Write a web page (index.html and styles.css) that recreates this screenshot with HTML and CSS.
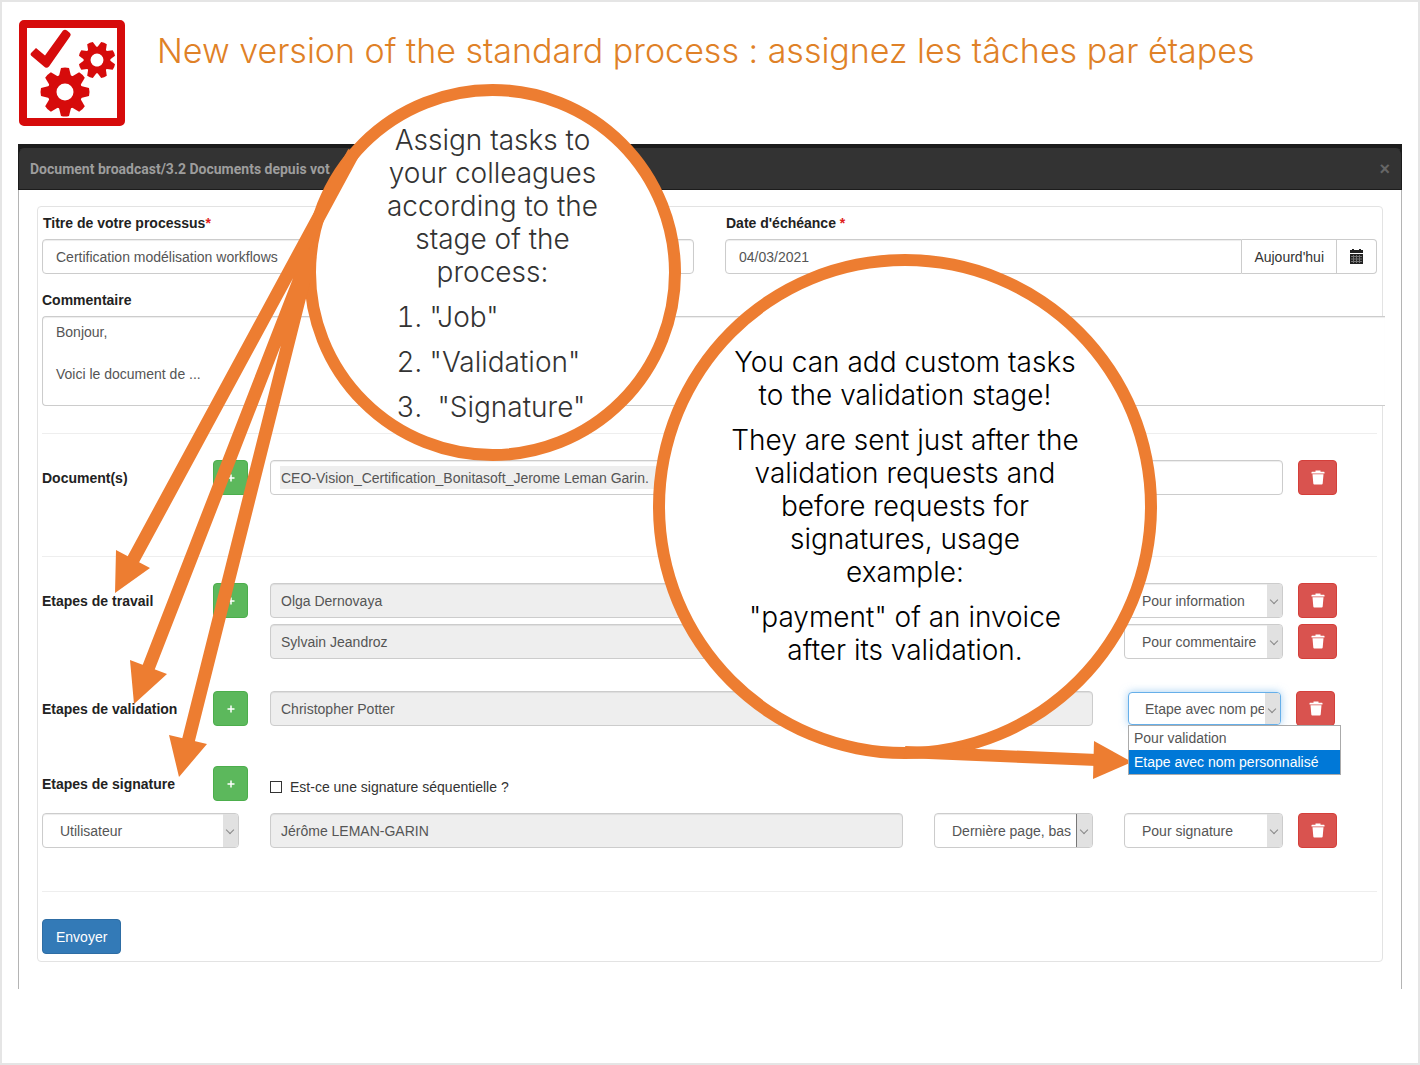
FILE: index.html
```html
<!DOCTYPE html>
<html lang="fr">
<head>
<meta charset="utf-8">
<title>New version of the standard process</title>
<link rel="stylesheet" href="styles.css">
</head>
<body>
<svg class="sprite" aria-hidden="true">
  <symbol id="trash" viewBox="0 0 14 15">
    <path fill="currentColor" d="M4.500 0.500h5v1.200h3.500a.5.500 0 0 1 .5.500v1.300H.5V2.200a.5.500 0 0 1 .5-.5h3.500zM1.500 4.300h11l-.8 9.300a1 1 0 0 1-1 .9H3.300a1 1 0 0 1-1-.9z"/>
  </symbol>
  <symbol id="plus" viewBox="0 0 8 8">
    <path fill="none" stroke="currentColor" stroke-width="1.500" d="M4 .5v7M.5 4h7"/>
  </symbol>
</svg>
<main class="slide">
  <header class="slide-header">
    <svg class="logo" viewBox="0 0 106 106" aria-hidden="true">
      <defs>
        <path id="tooth" d="M-6.500-14 -4-24q4-1 8 0L6.500-14z"/>
        <g id="gear">
          <circle r="13" fill="none" stroke="#d60b0b" stroke-width="9"/>
          <use href="#tooth"/><use href="#tooth" transform="rotate(45)"/>
          <use href="#tooth" transform="rotate(90)"/><use href="#tooth" transform="rotate(135)"/>
          <use href="#tooth" transform="rotate(180)"/><use href="#tooth" transform="rotate(225)"/>
          <use href="#tooth" transform="rotate(270)"/><use href="#tooth" transform="rotate(315)"/>
        </g>
      </defs>
      <rect x="4" y="4" width="98" height="98" rx="1" fill="#fff" stroke="#d60b0b" stroke-width="8" stroke-linejoin="round"/>
      <path d="M14.500 29.500 30 45 49 12.500" transform="translate(-14 -12)" fill="none"/>
      <path d="M12 33 17 28 26 35.500 44 10.500Q46 9 48 10.500L51 13Q52.500 14.500 51 16.500L30 46.500Q27.500 49 25 46.500L12 35.500Q11 34 12 33z" fill="#d60b0b"/>
      <g fill="#d60b0b">
        <use href="#gear" transform="translate(46 72)"/>
        <use href="#gear" transform="translate(78 40) rotate(22.500) scale(.76)"/>
      </g>
    </svg>
    <h1>New version of the standard process : assignez les tâches par étapes</h1>
  </header>

  <section class="dialog">
    <div class="dialog-frame">
      <div class="dialog-header">
        <h2>Document broadcast/3.2 Documents depuis vot</h2>
        <button class="close" type="button" aria-label="Fermer">×</button>
      </div>
    </div>
    <form class="dialog-body">
      <div class="panel">
        <div class="halves">
          <div>
            <label for="title">Titre de votre processus<span class="req">*</span></label>
            <input class="control" id="title" type="text" value="Certification modélisation workflows">
          </div>
          <div>
            <label for="due">Date d'échéance <span class="req">*</span></label>
            <div class="input-group">
              <input class="control" id="due" type="text" value="04/03/2021">
              <button class="addon" type="button">Aujourd'hui</button>
              <button class="addon" type="button" aria-label="Calendrier">
                <svg class="calendar" viewBox="0 0 15 16" aria-hidden="true">
                  <path fill="#222" d="M1 1h2V0h2v1h5V0h2v1h2v3H1zM1 5h13v10H1z"/>
                  <path stroke="#aaa" stroke-width="1" d="M2 7.500h11M2 10h11M2 12.500h11M4.500 6v8M7.500 6v8M10.500 6v8" opacity=".6"/>
                </svg>
              </button>
            </div>
          </div>
        </div>

        <label for="comment">Commentaire</label>
        <textarea class="control comment" id="comment">Bonjour,

Voici le document de ...</textarea>

        <hr>
        <div class="row documents">
          <label for="doc">Document(s)</label>
          <button class="add" type="button" aria-label="Ajouter un document"><svg><use href="#plus"/></svg></button>
          <div class="control file wide"><input id="doc" type="text" value="CEO-Vision_Certification_Bonitasoft_Jerome Leman Garin."></div>
          <button class="delete" type="button" aria-label="Supprimer"><svg><use href="#trash"/></svg></button>
        </div>
        <hr>

        <div class="row">
          <label for="work1">Etapes de travail</label>
          <button class="add" type="button" aria-label="Ajouter une étape de travail"><svg><use href="#plus"/></svg></button>
          <input class="control user" id="work1" type="text" value="Olga Dernovaya" readonly>
          <div class="select"><select class="control" aria-label="Type d'étape"><option>Pour information</option></select></div>
          <button class="delete" type="button" aria-label="Supprimer"><svg><use href="#trash"/></svg></button>
        </div>
        <div class="row second">
          <input class="control user" type="text" value="Sylvain Jeandroz" aria-label="Utilisateur" readonly>
          <div class="select"><select class="control" aria-label="Type d'étape"><option>Pour commentaire</option></select></div>
          <button class="delete" type="button" aria-label="Supprimer"><svg><use href="#trash"/></svg></button>
        </div>

        <div class="row validation">
          <label for="valid1">Etapes de validation</label>
          <button class="add" type="button" aria-label="Ajouter une étape de validation"><svg><use href="#plus"/></svg></button>
          <input class="control user" id="valid1" type="text" value="Christopher Potter" readonly>
          <div class="select open">
            <select class="control" aria-label="Type d'étape"><option>Etape avec nom personnalisé</option></select>
            <ul class="options">
              <li>Pour validation</li>
              <li class="active">Etape avec nom personnalisé</li>
            </ul>
          </div>
          <button class="delete" type="button" aria-label="Supprimer"><svg><use href="#trash"/></svg></button>
        </div>

        <div class="row signature">
          <label for="sign1">Etapes de signature</label>
          <button class="add" type="button" aria-label="Ajouter une étape de signature"><svg><use href="#plus"/></svg></button>
          <label class="check"><input type="checkbox">Est-ce une signature séquentielle ?</label>
        </div>
        <div class="row signer">
          <div class="select kind"><select class="control" aria-label="Type de signataire"><option>Utilisateur</option></select></div>
          <div class="signer-fields">
            <input class="control user" id="sign1" type="text" value="Jérôme LEMAN-GARIN" readonly>
            <div class="select place"><select class="control" aria-label="Emplacement"><option>Dernière page, bas</option></select></div>
          </div>
          <div class="select"><select class="control" aria-label="Type d'étape"><option>Pour signature</option></select></div>
          <button class="delete" type="button" aria-label="Supprimer"><svg><use href="#trash"/></svg></button>
        </div>
        <hr>
        <button class="send" type="submit">Envoyer</button>
      </div>
    </form>
  </section>

  <aside class="callout tasks">
    <p>Assign tasks to<br>your colleagues<br>according to the<br>stage of the<br>process:</p>
    <ol>
      <li>"Job"</li>
      <li>"Validation"</li>
      <li>&nbsp;"Signature"</li>
    </ol>
  </aside>
  <aside class="callout custom">
    <p>You can add custom tasks<br>to the validation stage!</p>
    <p>They are sent just after the<br>validation requests and<br>before requests for<br>signatures, usage<br>example:</p>
    <p>"payment" of an invoice<br>after its validation.</p>
  </aside>
  <svg class="arrows left-arrows" viewBox="100 130 270 660" aria-hidden="true">
    <path d="M354 152 133 560M311 250 148 669M310 256 188 742" fill="none" stroke="#ed7d31" stroke-width="13"/>
    <path d="M115 593 116 550 150 568zM134 704 130 660 167 674zM179 777 169 735 207 744z" fill="#ed7d31"/>
  </svg>
  <svg class="arrows right-arrow" viewBox="900 730 240 60" aria-hidden="true">
    <path d="M905 752 1097 760" stroke="#ed7d31" stroke-width="12"/>
    <path d="M1132 762 1094 741 1093 779z" fill="#ed7d31"/>
  </svg>
</main>
</body>
</html>
```
FILE: styles.css
```css
* { box-sizing: border-box; }

body {
  margin: 0;
  font: 14px/20px "Liberation Sans", Arial, sans-serif;
  color: #333;
}

button, input, select, textarea { font: inherit; color: inherit; }
button { padding: 0; cursor: pointer; }

.sprite { position: absolute; width: 0; height: 0; }

.slide {
  position: relative;
  min-height: 100vh;
  padding: 18px 16px;
  border: 2px solid #e5e5e5;
  background: #fff;
  overflow: hidden;
}

.slide-header { display: flex; gap: 32px; padding-left: 1px; margin-bottom: 18px; }
.logo { flex: none; width: 106px; height: 106px; }

h1 {
  margin: 9px 0 0;
  font: 300 34px/44px "Century Gothic", Inter, sans-serif;
  color: #df8127;
  white-space: nowrap;
}

/* Dialog */
.dialog-frame { padding-top: 4px; background: #1c1c1c; }

.dialog-header {
  display: flex;
  justify-content: space-between;
  align-items: center;
  height: 42px;
  padding: 0 11px;
  border: 1px solid #1c1c1c;
  border-top-color: #333;
  border-radius: 6px 6px 0 0;
  background: #333;
}

h2 { margin: 0; font: 700 14px/20px Roboto, sans-serif; color: #9d9d9d; }
.close { border: 0; background: none; color: #666; font-size: 18px; font-weight: 700; }

.dialog-body {
  padding: 16px 18px 27px;
  border: solid #b4b4b4;
  border-width: 0 1px;
}

.panel { padding: 6px 5px 7px 4px; border: 1px solid #e3e3e3; border-radius: 4px; }

label { display: block; font-weight: 700; color: #222; }
.req { color: #e02020; }

.control {
  display: block;
  width: 100%;
  height: 35px;
  padding: 0 13px;
  border: 1px solid #ccc;
  border-radius: 4px;
  background: #fff;
  color: #555;
  box-shadow: inset 0 1px 1px #00000013;
}

.halves {
  display: grid;
  grid-template-columns: 1fr 1fr;
  gap: 31px;
  margin-bottom: 16px;
}
.halves label { margin-bottom: 6px; padding-left: 1px; }

.input-group { display: flex; }
.input-group .control { flex: 1; border-radius: 4px 0 0 4px; }
.addon {
  display: flex;
  align-items: center;
  padding: 0 12px;
  border: 1px solid #ccc;
  border-left: 0;
  background: #fff;
}
.addon:last-child { border-radius: 0 4px 4px 0; }
.calendar { width: 15px; height: 16px; }

.comment {
  position: relative;
  width: calc(100% + 8px);
  height: 90px;
  margin-top: 6px;
  padding: 5px 13px;
  border-right: 0;
  border-radius: 4px 0 0 4px;
  line-height: 21px;
  resize: none;
  overflow: hidden;
}

hr { margin: 27px 0 26px; border: 0; border-top: 1px solid #eee; }

.row {
  display: grid;
  grid-template-columns: 171px 57px minmax(0, 1fr) 159px 54px;
  align-items: center;
  padding-right: 40px;
}
.row > .delete { margin-left: 15px; }
.row .user { grid-column: 3; width: calc(100% - 31px); }
.user { padding: 0 10px; background: #eee; }

.wide { grid-column: 3 / 5; }
.file { padding: 5px 9px; }
.file input {
  display: block;
  width: 400px;
  height: 23px;
  padding: 0 1px;
  border: 0;
  background: #eee;
}
.documents { margin-bottom: 61px; }

.add, .delete, .send { border: 1px solid; border-radius: 4px; color: #fff; }
.add, .delete { display: grid; place-items: center; height: 35px; }
.add { width: 35px; border-color: #4cae4c; background: #5cb85c; }
.add svg { width: 8px; height: 8px; }
.delete { width: 39px; border-color: #d43f3a; background: #d9534f; }
.delete svg { width: 14px; height: 15px; }

.select { position: relative; }
.select select { padding: 0 17px; appearance: none; }
.select::after {
  content: "";
  position: absolute;
  inset: 1px 1px 1px auto;
  width: 15px;
  border-radius: 0 3px 3px 0;
  background: #e1e1e1;
  pointer-events: none;
}
.select::before {
  content: "";
  position: absolute;
  z-index: 1;
  top: 14px;
  right: 6px;
  width: 5px;
  height: 5px;
  border: solid #888;
  border-width: 0 1px 1px 0;
  transform: rotate(45deg);
  pointer-events: none;
}

.second { margin-top: 6px; }
.validation { margin-top: 32px; }
.open { margin: 0 2px 0 4px; }
.open select {
  height: 33px;
  padding: 0 16px;
  border-color: #66afe9;
  box-shadow: 0 0 8px #66afe999;
}
.validation > .delete { margin-left: 13px; }

.options {
  position: absolute;
  z-index: 2;
  top: 100%;
  left: 0;
  width: 213px;
  margin: 0;
  padding: 0;
  border: 1px solid #aaa;
  background: #fff;
  color: #555;
  list-style: none;
}
.options li { padding: 2px 5px; }
.options .active { background: #0078d7; color: #fff; }

.signature { margin-top: 40px; }
.check {
  display: flex;
  align-items: center;
  gap: 8px;
  padding-top: 6px;
  font-weight: 400;
  color: #333;
}
.check input {
  width: 12px;
  height: 12px;
  margin: 0;
  border: 1px solid #333;
  appearance: none;
}

.signer { margin-top: 12px; }
.signer .kind { grid-column: 1 / 3; margin-right: 31px; }
.signer-fields { display: flex; gap: 31px; padding-right: 31px; }
.signer-fields .user { flex: 1; min-width: 0; }
.place { width: 159px; }
.place::after { border-left: 1px solid #777; border-radius: 0 3px 3px 0; }

.signer + hr { margin: 43px 0 27px; }

.send {
  height: 35px;
  padding: 0 13px;
  border-color: #2e6da4;
  background: #337ab7;
}

/* Callouts pinned over the dialog */
.callout {
  position: absolute;
  display: flex;
  flex-direction: column;
  align-items: center;
  border: 12px solid #ed7d31;
  border-radius: 50%;
  background: #fff;
  font: 300 28px/33px "Century Gothic", Inter, sans-serif;
  text-align: center;
  white-space: nowrap;
}
.callout p { margin: 0 0 12px; }
.tasks { top: 82px; left: 302px; width: 377px; height: 377px; padding-top: 28px; }
.custom { top: 252px; left: 651px; width: 504px; height: 505px; padding-top: 80px; color: #000; }
.tasks ol { margin: 0; padding-left: 30px; text-align: left; }
.tasks li { margin-bottom: 12px; }

.arrows { position: absolute; pointer-events: none; }
.left-arrows { top: 128px; left: 98px; width: 270px; height: 660px; }
.right-arrow { top: 728px; left: 898px; width: 240px; height: 60px; }
```
